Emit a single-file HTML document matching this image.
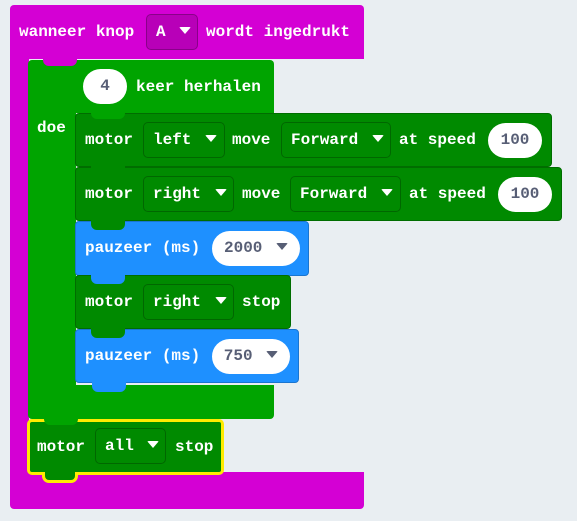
<!DOCTYPE html>
<html><head><style>
body{margin:0;width:577px;height:521px;overflow:hidden;background:#e9eef2;position:relative;
font-family:"Liberation Mono",monospace;font-weight:bold;font-size:16px;color:#fff;}
div{position:absolute;box-sizing:border-box}
.t{position:absolute;line-height:20px;white-space:nowrap}
.dd{border:1px solid rgba(0,0,0,.25);border-radius:5px;height:36px;line-height:34px;padding-left:9px;white-space:nowrap}
.ov{background:#fff;color:#575e75;border-radius:18px;height:35px;line-height:35px;text-align:center;white-space:nowrap}
.dg{background:#008a00;border:1px solid #006d00;border-radius:4px}
.bl{background:#1e90ff;border:1px solid #1a75d0;border-radius:4px}
.tab{width:34px;height:10px;border-radius:0 0 6px 6px}
i{display:inline-block;width:0;height:0;border-left:6px solid transparent;border-right:6px solid transparent;border-top:7px solid #fff;vertical-align:middle;margin-left:4px;margin-top:-3px;border-radius:2px}
.ov i{border-top-color:#575e75}
</style></head><body>
<!-- magenta -->
<div style="left:10px;top:5px;width:354px;height:54px;background:#d400d4;border-radius:4px 4px 0 0"></div>
<div style="left:10px;top:58px;width:19px;height:416px;background:#d400d4"></div>
<div style="left:10px;top:472px;width:354px;height:37px;background:#d400d4;border-radius:0 0 4px 4px"></div>
<span class="t" style="left:19px;top:22px">wanneer knop</span>
<div class="dd" style="left:146px;top:14px;width:52px;background:#b800b8">A <i></i></div>
<span class="t" style="left:206px;top:22px">wordt ingedrukt</span>
<!-- green loop -->
<div style="left:28px;top:60px;width:246px;height:53px;background:#00a400;border-radius:4px 4px 0 0"></div>
<div style="left:28px;top:112px;width:48px;height:276px;background:#00a400"></div>
<div style="left:28px;top:385px;width:246px;height:34px;background:#00a400;border-radius:0 0 4px 4px"></div>
<div class="tab" style="left:43px;top:58px;height:8px;background:#d400d4"></div>
<div class="ov" style="left:83px;top:69px;width:44px">4</div>
<span class="t" style="left:136px;top:77px">keer herhalen</span>
<span class="t" style="left:37px;top:118px">doe</span>
<!-- row1 -->
<div class="dg" style="left:75px;top:113px;width:477px;height:54px"></div>
<div class="tab" style="left:91px;top:112px;height:7px;background:#00a400"></div>
<span class="t" style="left:85px;top:130px">motor</span>
<div class="dd" style="left:143px;top:122px;width:82px">left <i></i></div>
<span class="t" style="left:232px;top:130px">move</span>
<div class="dd" style="left:281px;top:122px;width:110px">Forward <i></i></div>
<span class="t" style="left:399px;top:130px">at speed</span>
<div class="ov" style="left:488px;top:123px;width:54px">100</div>
<!-- row2 -->
<div class="dg" style="left:75px;top:167px;width:487px;height:54px"></div>
<div class="tab" style="left:91px;top:166px;background:#008a00"></div>
<span class="t" style="left:85px;top:184px">motor</span>
<div class="dd" style="left:143px;top:176px;width:91px">right <i></i></div>
<span class="t" style="left:242px;top:184px">move</span>
<div class="dd" style="left:290px;top:176px;width:111px">Forward <i></i></div>
<span class="t" style="left:409px;top:184px">at speed</span>
<div class="ov" style="left:498px;top:177px;width:54px">100</div>
<!-- blue1 -->
<div class="bl" style="left:75px;top:221px;width:234px;height:55px"></div>
<div class="tab" style="left:91px;top:220px;background:#008a00"></div>
<span class="t" style="left:85px;top:238px">pauzeer (ms)</span>
<div class="ov" style="left:212px;top:231px;width:88px">2000 <i></i></div>
<!-- row stop -->
<div class="dg" style="left:75px;top:275px;width:216px;height:54px"></div>
<div class="tab" style="left:91px;top:274px;background:#1e90ff"></div>
<span class="t" style="left:85px;top:292px">motor</span>
<div class="dd" style="left:143px;top:284px;width:91px">right <i></i></div>
<span class="t" style="left:242px;top:292px">stop</span>
<!-- blue2 -->
<div class="bl" style="left:75px;top:329px;width:224px;height:54px"></div>
<div class="tab" style="left:91px;top:328px;background:#008a00"></div>
<span class="t" style="left:85px;top:346px">pauzeer (ms)</span>
<div class="ov" style="left:212px;top:339px;width:78px">750 <i></i></div>
<div class="tab" style="left:92px;top:382px;background:#1e90ff"></div>
<!-- motor all -->
<div style="left:27px;top:419px;width:197px;height:56px;background:#008a00;border:3px solid #ffeb00;border-radius:5px"></div>
<div class="tab" style="left:44px;top:419px;height:6px;background:#00a400"></div>
<div style="left:42px;top:472px;width:36px;height:11px;background:#008a00;border:3px solid #ffeb00;border-top:none;border-radius:0 0 7px 7px"></div>
<span class="t" style="left:37px;top:437px">motor</span>
<div class="dd" style="left:95px;top:428px;width:71px">all <i></i></div>
<span class="t" style="left:175px;top:437px">stop</span>
</body></html>
